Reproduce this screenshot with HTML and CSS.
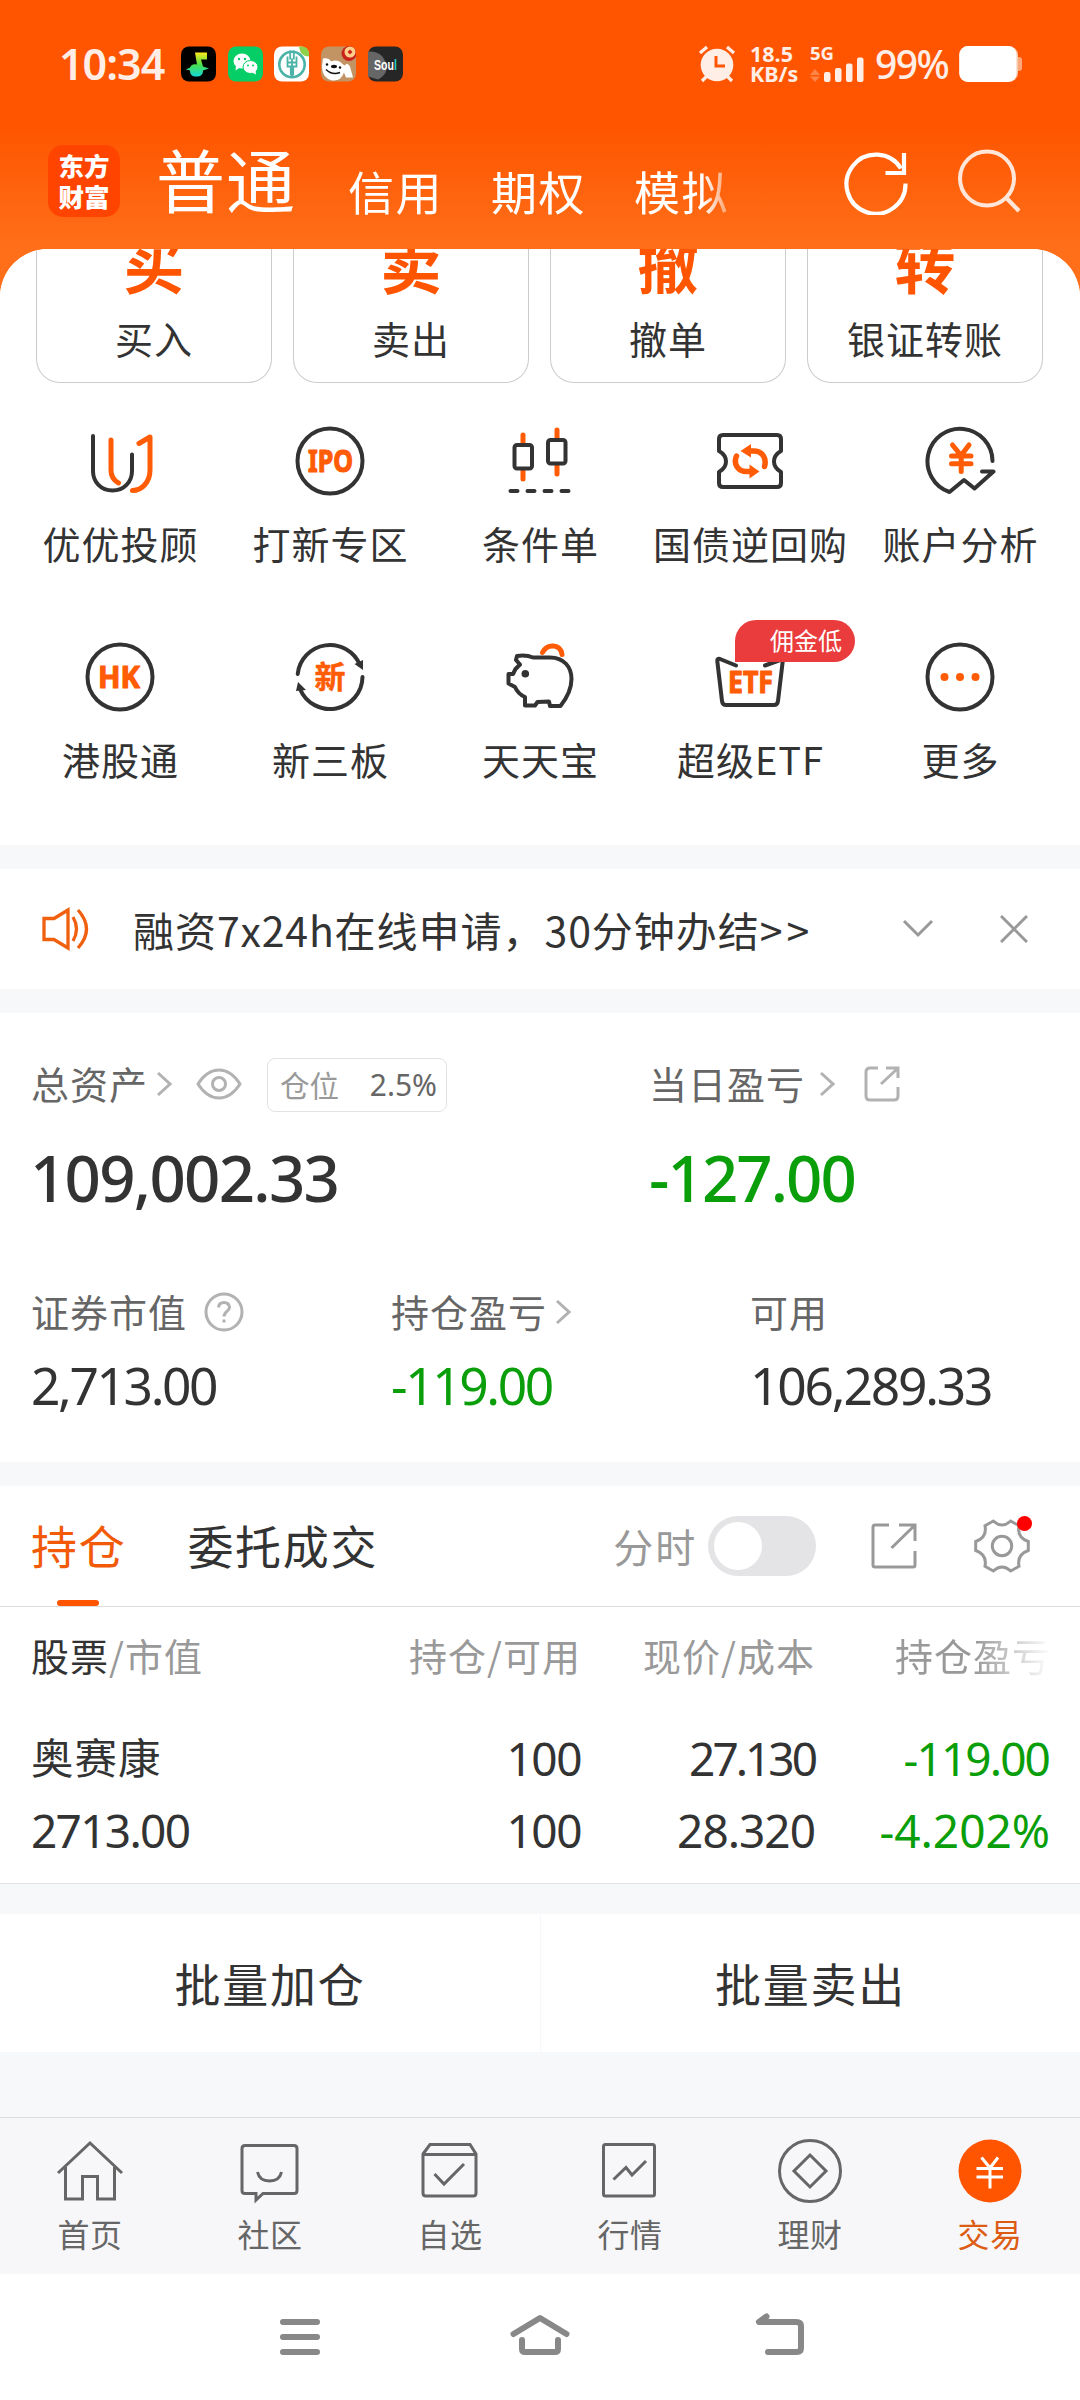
FILE: index.html
```html
<!DOCTYPE html>
<html lang="zh-CN">
<head>
<meta charset="utf-8">
<title>东方财富 - 交易</title>
<link rel="stylesheet" href="styles.css">
</head>
<body>
<div class="screen">
  <header class="top">
    <div class="status">
      <div class="clock">10:34</div>
      <div class="apps">
        <svg class="app" viewBox="0 0 35 35"><defs><linearGradient id="qm" x1="0" y1="0" x2="0" y2="1"><stop offset="0" stop-color="#ffe81c"/><stop offset=".5" stop-color="#4be04a"/><stop offset="1" stop-color="#12d8d8"/></linearGradient></defs><rect width="35" height="35" rx="8" fill="#000"/><path d="M14 6H26V13H20L22 20 28 22 22 24C22 28 20 30 15.500 30S9 28 9 24L5 23 9 21C10 18 13 17 16 18Z" fill="url(#qm)"/></svg>
        <svg class="app" viewBox="0 0 35 35"><rect width="35" height="35" rx="8" fill="#06ce66"/><ellipse cx="14" cy="14.500" rx="8.500" ry="7.500" fill="#fff"/><path d="M8 19L7.500 24 12 21Z" fill="#fff"/><circle cx="11" cy="12.500" r="1.200" fill="#06ce66"/><circle cx="17" cy="12.500" r="1.200" fill="#06ce66"/><ellipse cx="22.500" cy="20.500" rx="7.500" ry="6.500" fill="#fff" stroke="#06ce66"/><path d="M24 26L28 28 27.500 24Z" fill="#fff"/><circle cx="20" cy="19" r="1" fill="#06ce66"/><circle cx="25" cy="19" r="1" fill="#06ce66"/></svg>
        <svg class="app" viewBox="0 0 35 35"><rect width="35" height="35" rx="8" fill="#fff"/><path d="M25 0H27Q35 0 35 8V10Q26 10 25 0Z" fill="#8fd14a"/><circle cx="18" cy="18" r="12.700" fill="none" stroke="#4bb3a7" stroke-width="2.600"/><path d="M16.200 4V13M19.800 4V13M13.500 10V20H22.500V10M18 12V31M13.500 16H22.500M16.800 20V29M19.200 20V29" fill="none" stroke="#4bb3a7" stroke-width="1.800"/></svg>
        <svg class="app" viewBox="0 0 35 35"><rect width="35" height="35" rx="8" fill="#c39463"/><path d="M2 12Q8 11 10 15 17 12 22 18L24 19Q26 15 29 20L32 31 25 31 23 26Q20 35 11 34 1 31 1 20Z" fill="#fff"/><circle cx="28" cy="7" r="7.500" fill="#c9231b"/><circle cx="29" cy="5.500" r="5.500" fill="#ffd08a"/><path d="M29 3L31.500 5.500 29 8 26.500 5.500Z" fill="#c9231b"/><ellipse cx="13" cy="20" rx="3" ry="1.700" fill="#111"/><circle cx="6" cy="18" r="1.200" fill="#111"/><circle cx="19" cy="21" r="1.200" fill="#111"/><path d="M5 23Q11 29 19 26" fill="none" stroke="#111" stroke-width="1.500"/></svg>
        <svg class="app" viewBox="0 0 35 35"><rect width="35" height="35" rx="8" fill="#262626"/><path d="M0 5Q14 4 18 17 21 27 10 33L0 30Z" fill="#666"/><text x="6" y="23.500" class="soul" textLength="23" lengthAdjust="spacingAndGlyphs">Sou<tspan fill="#25d4c5">l</tspan></text></svg>
      </div>
      <div class="signals">
        <svg class="alarm" viewBox="0 0 38 38"><circle cx="19" cy="20" r="16.300" fill="#ffeee6"/><path d="M2 8L9 2M36 8L29 2M4 36L9 31M34 36L29 31" stroke="#ffeee6" stroke-width="3.200"/><path d="M18 11V21H27" fill="none" stroke="#ff5500" stroke-width="3"/></svg>
        <div class="speed"><span>18.5</span><span>KB/s</span></div>
        <svg class="bars" viewBox="0 0 56 38"><text x="0" y="15" class="g5">5G</text><path d="M5 24L10 30H0ZM5 37L0 31.500H10Z" fill="#ff8447"/><g fill="#ffeee6"><rect x="14" y="27" width="6.500" height="10" rx="2"/><rect x="25" y="23" width="6.500" height="14" rx="2"/><rect x="36" y="18.500" width="6.500" height="18.500" rx="2"/><rect x="47" y="12.500" width="6.500" height="24.500" rx="2"/></g></svg>
        <div class="percent">99%</div>
        <svg class="battery" viewBox="0 0 64 38"><rect x="56" y="12" width="7" height="14" rx="3" fill="#ffa87c"/><rect x="0" y="1" width="59" height="36" rx="9" fill="#ffc7aa"/><rect x="0.500" y="1" width="57" height="36" rx="8.500" fill="#fff"/></svg>
      </div>
    </div>
    <nav class="account-bar">
      <div class="logo"><span>东方</span><span>财富</span></div>
      <div class="accounts">
        <span class="account current">普通</span><span class="account">信用</span><span class="account">期权</span><span class="account">模拟</span>
      </div>
      <svg class="tool" viewBox="0 0 64 64"><path d="M61.500 32.500A29.500 29.500 0 1 1 57 17.500M60 2V22H41.500" fill="none" stroke="#fff" stroke-width="4.200"/></svg>
      <svg class="tool" viewBox="0 0 64 64"><circle cx="29" cy="29.500" r="27" fill="none" stroke="#ffe6d9" stroke-width="4"/><path d="M48 48.500L61 62" stroke="#ffe6d9" stroke-width="4.200"/></svg>
    </nav>
  </header>

  <main class="sheet">
    <section class="actions">
      <div class="action"><b>买</b><span>买入</span></div>
      <div class="action"><b>卖</b><span>卖出</span></div>
      <div class="action"><b>撤</b><span>撤单</span></div>
      <div class="action"><b>转</b><span>银证转账</span></div>
    </section>

    <section class="features">
      <div class="feature"><svg viewBox="0 0 72 72"><path class="dk" d="M9 11V46C9 57 17 65.500 28.500 65.500S48 57 48 46V29.500"/><path class="or" d="M27 15V45Q27 54 34.500 58M55 18.500L66 12V45C66 57 58 65.500 48.500 65.500"/></svg><span>优优投顾</span></div>
      <div class="feature"><svg viewBox="0 0 72 72"><circle class="dk" cx="36" cy="36" r="32.500"/><text class="ico" x="14" y="47" textLength="45" lengthAdjust="spacingAndGlyphs">IPO</text></svg><span>打新专区</span></div>
      <div class="feature"><svg viewBox="0 0 72 72"><path class="or" d="M19 10V19M19 46V54M53 5V14M53 41V49"/><rect class="dk" x="10.500" y="20" width="17.500" height="23.500" rx="2.500"/><rect class="dk" x="44" y="15" width="17.500" height="23.500" rx="2.500"/><path class="dk" d="M6.500 66H13.500M23.500 66H30.500M40.500 66H47.500M57.500 66H64.500"/></svg><span>条件单</span></div>
      <div class="feature"><svg viewBox="0 0 72 72"><path class="dk" d="M9 10H63Q67 10 67 14V26Q60 30 60 36.500T67 47V58Q67 62 63 62H9Q5 62 5 58V47Q12 43 12 36.500T5 26V14Q5 10 9 10Z"/><path class="or thick" d="M50.500 41.500C53 33 48 26 40 26H36M22.500 31C19 39 24 46.500 32.500 46.500H37"/><path d="M26.500 26L37 19V32.500ZM45.500 46.500L35.500 39.500V53.500Z" fill="#ff5c05"/></svg><span>国债逆回购</span></div>
      <div class="feature"><svg viewBox="0 0 72 72"><path class="dk" d="M68.500 36A32.500 32.500 0 1 0 25.500 67L40 55 50.500 63.500 69.500 46.500H58"/><path class="or" d="M28.500 20L37 30.500 45 20M27.500 31H47M27.500 38.700H47M37.200 31V46.500"/></svg><span>账户分析</span></div>
      <div class="feature"><svg viewBox="0 0 72 72"><circle class="dk" cx="36" cy="36" r="32.500"/><text class="ico" x="14" y="47" textLength="42" lengthAdjust="spacingAndGlyphs">HK</text></svg><span>港股通</span></div>
      <div class="feature"><svg viewBox="0 0 72 72"><path class="dk" d="M3.700 33A32.500 32.500 0 0 1 66 24M68.500 36A32.500 32.500 0 0 1 6 48"/><path d="M60.500 23L69 19V29ZM2 50L4 41 12 49Z" fill="#333"/><text class="ico cn" x="20.500" y="47">新</text></svg><span>新三板</span></div>
      <div class="feature"><svg viewBox="0 0 72 72"><path class="or" d="M38.500 11.500Q42 4.500 49.500 5T58 13.500"/><path class="dk" d="M13 15Q22 13.500 29 16.500H46C60 16.500 67.500 26 67.500 38 67.500 49 62 58 56.500 65H46L45 60.500 33.500 61 31 64.500H21V56Q14 53 11 46L4.500 42.500V33H9L11.500 28 16 23.500 12 19Z"/><circle cx="21.300" cy="32.700" r="3.800" fill="#333"/></svg><span>天天宝</span></div>
      <div class="feature"><em class="badge">佣金低</em><svg viewBox="0 0 72 72"><path class="dk" d="M22 24.500L6 18Q3 17 3.300 20L8 60Q8.500 64 12 64H60Q63.500 64 64 60L69 18 51 24.500"/><text class="ico" x="14" y="52" textLength="45" lengthAdjust="spacingAndGlyphs">ETF</text></svg><span>超级ETF</span></div>
      <div class="feature"><svg viewBox="0 0 72 72"><circle class="dk" cx="36" cy="36" r="32.500"/><g fill="#ff5c05"><circle cx="20.500" cy="36" r="4"/><circle cx="36" cy="36" r="4"/><circle cx="51.500" cy="36" r="4"/></g></svg><span>更多</span></div>
    </section>

    <section class="notice">
      <svg class="horn" viewBox="0 0 48 44"><path d="M2 11.500H12L26 3V41L12 32.500H2ZM31 10Q38 22 31 34M36 3Q53 22 36 41" fill="none" stroke="#f0600f" stroke-width="3.300"/></svg>
      <p>融资<i>7x24h</i>在线申请，<i>30</i>分钟办结<i>&gt;&gt;</i></p>
      <svg class="down" viewBox="0 0 32 20"><path d="M2 2L16 16 30 2" fill="none" stroke="#999" stroke-width="3"/></svg>
      <svg class="close" viewBox="0 0 28 28"><path d="M1 1L27 27M27 1L1 27" stroke="#999" stroke-width="3"/></svg>
    </section>

    <section class="assets">
      <div class="totals">
        <div class="total">
          <div class="caption">
            <span>总资产</span>
            <svg class="chev" viewBox="0 0 16 26"><path d="M2 2L14 13 2 24"/></svg>
            <svg class="eye" viewBox="0 0 46 32"><path d="M2 16Q11 2 23 2T44 16Q35 30 23 30T2 16Z"/><circle cx="23" cy="16" r="6.500"/></svg>
            <span class="position"><span>仓位</span><b>2.5%</b></span>
          </div>
          <div class="big n1">109,002.33</div>
        </div>
        <div class="total">
          <div class="caption">
            <span>当日盈亏</span>
            <svg class="chev far" viewBox="0 0 16 26"><path d="M2 2L14 13 2 24"/></svg>
            <svg class="share" viewBox="0 0 36 36"><path d="M14 2H6Q2 2 2 6V30Q2 34 6 34H30Q34 34 34 30V21M22 2H34V12M33 3L17 18"/></svg>
          </div>
          <div class="big green n2">-127.00</div>
        </div>
      </div>
      <div class="details">
        <div><div class="caption"><span>证券市值</span><svg class="help" viewBox="0 0 40 40"><circle cx="20" cy="20" r="18"/><path d="M14.500 15.500Q15 10.500 20 10.500T25.500 15.500C25.500 19 20 19.500 20 24.500M20 27.500V30.500"/></svg></div><div class="mid n3">2,713.00</div></div>
        <div><div class="caption"><span>持仓盈亏</span><svg class="chev near" viewBox="0 0 16 26"><path d="M2 2L14 13 2 24"/></svg></div><div class="mid green n4">-119.00</div></div>
        <div><div class="caption"><span>可用</span></div><div class="mid n5">106,289.33</div></div>
      </div>
    </section>

    <section class="holdings">
      <div class="tabs">
        <span class="tab on">持仓</span><span class="tab">委托成交</span>
        <span class="minute">分时</span><span class="switch"></span>
        <svg class="export" viewBox="0 0 46 46"><path d="M18 2H4Q2 2 2 4V42Q2 44 4 44H42Q44 44 44 42V28M28 2H44V18M43 3L20.500 25"/></svg>
        <span class="gear"><svg viewBox="0 0 60 60"><path d="M21.300 5Q30 13 38.700 5L47 9.700Q44.700 21.500 56.300 25.500V34.500Q44.700 38.500 47 50.300L38.700 55Q30 47 21.300 55L13 50.300Q15.300 38.500 3.700 34.500V25.500Q15.300 21.500 13 9.700Z"/><circle cx="30" cy="30" r="9.700"/></svg></span>
      </div>
      <div class="thead"><span><b>股票</b>/市值</span><span>持仓/可用</span><span>现价/成本</span><span class="fade">持仓盈亏</span></div>
      <div class="row">
        <div><span class="name">奥赛康</span><span class="n6">2713.00</span></div>
        <div><span class="n7">100</span><span class="n7">100</span></div>
        <div><span class="n8">27.130</span><span class="n9">28.320</span></div>
        <div class="green"><span class="n10">-119.00</span><span class="n11">-4.202%</span></div>
      </div>
    </section>

    <section class="batch"><button>批量加仓</button><button>批量卖出</button></section>
  </main>

  <footer class="tabbar">
    <div class="item"><svg viewBox="0 0 68 68"><path d="M2 36L34 6 66 36M9.500 30V62H26.500V39.500H41.500V62H58.500V30"/></svg><span>首页</span></div>
    <div class="item"><svg viewBox="0 0 68 68"><path d="M9 8.500H58Q61 8.500 61 11.500V53.500Q61 56.500 58 56.500H27L20 63V56.500H9Q6 56.500 6 53.500V11.500Q6 8.500 9 8.500ZM21.500 35Q23.500 44 33.500 44T45.500 35"/></svg><span>社区</span></div>
    <div class="item"><svg viewBox="0 0 68 68"><path d="M7 17L14 7.500H54L60 17V56Q60 59 57 59H10Q7 59 7 56ZM7 17.500H60M18.500 37L28 47 48 27"/></svg><span>自选</span></div>
    <div class="item"><svg viewBox="0 0 68 68"><rect x="7.500" y="7.500" width="51" height="51.500" rx="2"/><path d="M17.500 42.500L30 30.500 36 38 50 24"/></svg><span>行情</span></div>
    <div class="item"><svg viewBox="0 0 68 68"><circle cx="34" cy="34" r="30.500"/><path d="M34 18L50 34 34 50 18 34Z"/></svg><span>理财</span></div>
    <div class="item on"><svg viewBox="0 0 68 68"><circle cx="34" cy="34" r="31.500"/><path d="M25.500 20.500L34 31 42 20.500M20.500 31.500H47M20.500 40H47M34 31V51.500"/></svg><span>交易</span></div>
  </footer>

  <div class="sysnav">
    <svg viewBox="0 0 60 48"><path d="M6.500 9H40.500M6.500 24H40.500M6.500 39H40.500"/></svg>
    <svg viewBox="0 0 60 48"><path d="M3.500 21L30 5 56.500 21M12 27V36Q12 39 15 39H45Q48 39 48 36V27"/></svg>
    <svg viewBox="0 0 60 48"><path d="M16.500 3.500L9 9H46Q51 9 51 13V35Q51 39 47 39H18"/></svg>
  </div>
</div>
</body>
</html>
```
FILE: styles.css
```css
* { box-sizing: border-box; }
body { margin: 0; }
.screen {
  width: 1080px; height: 2400px; overflow: hidden;
  display: flex; flex-direction: column;
  font-family: "Noto Sans CJK SC", sans-serif;
  font-size: 38px; letter-spacing: 1px; color: #333;
  background: linear-gradient(#ff5500 0 125px, #ff6e18 245px) #ff6e18;
}
svg { display: block; flex: none; }
i, em { font-style: normal; }

.status { height: 128px; display: flex; align-items: center; padding: 0 57px 0 59px; color: #ffeee6; }
.clock { width: 122px; font: 600 43px/60px "Noto Sans"; letter-spacing: -1px; }
.apps { display: flex; gap: 11.700px; }
.app { width: 35px; height: 36px; }
.soul { font: 700 15px "Liberation Sans"; fill: #fff; letter-spacing: 0; }
.signals { display: flex; align-items: center; margin-left: auto; }
.alarm { width: 38px; height: 38px; margin-right: 14px; }
.speed { width: 60px; display: flex; flex-direction: column; font: 700 21.500px/20px "Noto Sans"; letter-spacing: 0; }
.bars { width: 56px; height: 38px; }
.g5 { font: 700 18.500px "Noto Sans"; fill: #ffeee6; letter-spacing: 0; }
.percent { width: 93px; padding-left: 9px; font: 500 39px/56px "Noto Sans"; letter-spacing: -1.500px; white-space: nowrap; }
.battery { width: 64px; height: 38px; }

.account-bar { height: 121px; display: flex; align-items: flex-start; padding: 17px 53px 0 48px; color: #fff; }
.logo { width: 72px; height: 72px; border-radius: 15px; background: #ff4400; display: flex; flex-direction: column; align-items: center; justify-content: center; padding-bottom: 3px; font-weight: 900; font-size: 25.500px; line-height: 31px; letter-spacing: 0; }
.accounts { display: flex; align-items: flex-start; width: 574px; margin: 0 112px 0 38px; white-space: nowrap; mask-image: linear-gradient(90deg, #000 545px, rgba(255,255,255,.5) 565px, rgba(255,255,255,.4) 574px); }
.account { font-size: 46px; line-height: 68px; margin: 11px 48px 0 0; letter-spacing: 1.500px; }
.account.current { font-size: 69px; line-height: 100px; margin: -17px 52px 0 -2px; letter-spacing: 1px; }
.tool { width: 64px; height: 64px; margin: 6px 0 0; }
.tool + .tool { margin: 4px 0 0 50px; }

.sheet { flex: none; background: #f7f8fa; border-radius: 48px 48px 0 0; overflow: hidden; height: 1868px; }
.actions { height: 134px; background: #fff; display: grid; grid-template-columns: repeat(4, 236px); gap: 21px; padding: 0 36px; }
.action { height: 134px; overflow: hidden; border: 1px solid #ccc; border-top: 0; border-radius: 0 0 24px 24px; display: flex; flex-direction: column; justify-content: flex-end; align-items: center; padding-bottom: 16px; }
.action b { flex: none; font-size: 61px; line-height: 64px; margin-bottom: 15px; color: #ff5500; letter-spacing: 0; font-weight: 700; }
.action span { flex: none; line-height: 56px; }

.features { height: 462px; background: #fff; display: grid; grid-template-columns: repeat(5, 210px); grid-auto-rows: 216px; padding: 42px 15px 0; }
.feature { position: relative; display: flex; flex-direction: column; align-items: center; }
.feature svg { width: 72px; height: 72px; }
.feature span { margin-top: 18px; padding-left: 1px; line-height: 56px; white-space: nowrap; }
.dk { fill: none; stroke: #333; stroke-width: 4; stroke-linecap: round; stroke-linejoin: round; }
.or { fill: none; stroke: #ff5c05; stroke-width: 5; stroke-linecap: round; stroke-linejoin: round; }
.thick { stroke-width: 5.500; }
.ico { font: 700 30.500px "Noto Sans"; fill: #ff5c05; stroke: #ff5c05; stroke-width: 1.200; stroke-linejoin: round; letter-spacing: 0; }
.ico.cn { font: 700 31px "Noto Sans CJK SC"; stroke-width: .5; }
.badge { position: absolute; z-index: 1; left: 90px; top: -21px; width: 120px; height: 42px; padding-right: 13px; border-radius: 21px 21px 21px 0; background: #ea3c3c; color: #fff; font-size: 24px; line-height: 39px; letter-spacing: 0; text-align: right; }

.notice { height: 120px; margin-top: 24px; background: #fff; display: flex; align-items: center; padding-left: 42px; }
.horn { width: 48px; height: 44px; }
.notice p { width: 722px; margin: 0 0 0 43px; font-size: 41px; line-height: 60px; white-space: nowrap; }
.notice i { letter-spacing: .800px; }
.notice i:last-child { letter-spacing: 4px; }
.down { width: 32px; height: 20px; margin-left: 47px; }
.close { width: 28px; height: 28px; margin-left: 66px; }

.assets { height: 449px; margin-top: 24px; padding: 41px 0 0 31px; background: #fff; color: #666; }
.totals { display: grid; grid-template-columns: 618px 1fr; }
.caption { height: 60px; display: flex; align-items: center; line-height: 56px; }
.caption span { padding-bottom: 2px; }
.caption svg { fill: none; stroke: #b2b2b2; stroke-width: 3; }
.chev { width: 16px; height: 26px; margin-left: 8px; }
.chev.far { margin-left: 14px; }
.chev.near { margin-left: 8px; }
.eye { width: 46px; height: 32px; margin-left: 24px; }
.caption .position { width: 180px; height: 54px; margin: 1px 0 0 25px; border: 1px solid #e2e2e2; border-radius: 8px; display: flex; align-items: center; justify-content: space-between; padding: 0 9px 0 12px; font-size: 29.500px; color: #999; letter-spacing: 0; }
.position b { font: 400 30px/50px "Noto Sans"; color: #666; letter-spacing: 0; }
.share { width: 36px; height: 36px; margin-left: 29px; }
.help { width: 40px; height: 40px; margin-left: 17px; }
.big { font: 500 63.500px/88px "Noto Sans"; margin-top: 20px; color: #333; }
.mid { font: 400 51.500px/72px "Noto Sans"; margin-top: 7px; color: #333; }
.details { display: grid; grid-template-columns: 360px 359px 1fr; margin-top: 60px; }
.assets .green, .green { color: #0a9e0a; }
.n1 { letter-spacing: -1.700px; margin-left: -1px; } .n2 { letter-spacing: -1.900px; } .n3 { letter-spacing: -2.400px; }
.n4 { letter-spacing: -2.400px; } .n5 { letter-spacing: -2.200px; } .n6 { letter-spacing: -1.700px; }
.n7 { letter-spacing: -1.500px; } .n8 { letter-spacing: -3px; } .n9 { letter-spacing: -1px; }
.n10 { letter-spacing: -1.900px; } .n11 { letter-spacing: 0; margin-right: -1px; }

.holdings { height: 398px; margin-top: 24px; background: #fff; border-bottom: 1px solid #e4e4e6; }
.tabs { height: 121px; border-bottom: 1px solid #ddd; display: flex; align-items: center; padding-left: 31px; }
.tab { position: relative; font-size: 46px; line-height: 116px; height: 120px; letter-spacing: 1.700px; margin-right: 61px; }
.tab.on { color: #f25a08; }
.tab.on::after { content: ""; position: absolute; left: 26px; bottom: 0; width: 42px; height: 6px; border-radius: 3px; background: #ff5500; }
.minute { width: 95px; margin-left: 174px; font-size: 40px; line-height: 60px; letter-spacing: 2px; color: #999; }
.switch { width: 108px; height: 60px; border-radius: 30px; background: #e4e4e6; padding: 6px; }
.switch::before { content: ""; display: block; width: 48px; height: 48px; border-radius: 50%; background: #fff; }
.export { width: 46px; height: 46px; margin-left: 55px; }
.export, .gear svg { fill: none; stroke: #999; stroke-width: 3; }
.gear { position: relative; width: 60px; height: 60px; margin-left: 55px; }
.gear::after { content: ""; position: absolute; left: 45px; top: 0; width: 15px; height: 15px; border-radius: 50%; background: #f00; }
.thead, .row { display: grid; grid-template-columns: 299px 251px 234px 1fr; padding: 0 31px; }
.thead { height: 100px; line-height: 95px; color: #999; }
.thead b { font-weight: 400; color: #333; }
.thead span:nth-child(2), .thead span:nth-child(3), .row div + div { text-align: right; }
.thead .fade { padding-left: 80px; white-space: nowrap; mask-image: linear-gradient(90deg, #000 160px, rgba(0,0,0,.1) 228px, transparent 236px); }
.row div { display: flex; flex-direction: column; font: 400 46px/72px "Noto Sans"; padding-top: 15px; }
.row .name { font: 400 42.500px/72px "Noto Sans CJK SC"; letter-spacing: 1px; margin-top: -2px; padding-bottom: 2px; }

.batch { height: 138px; margin-top: 30px; background: #fff; display: grid; grid-template-columns: 1fr 1fr; }
.batch button { font: 400 46px/136px "Noto Sans CJK SC"; letter-spacing: 1.700px; color: #333; border: 0; padding: 0 0 4px; background: none; }
.batch button + button { border-left: 1px solid #f6f7fa; }

.tabbar { flex: none; height: 157px; border-top: 1px solid #ddd; background: #f7f7fa; display: grid; grid-template-columns: repeat(6, 180px); }
.item { display: flex; flex-direction: column; align-items: center; padding-top: 19px; font-size: 32px; letter-spacing: .5px; line-height: 48px; color: #666; }
.item svg { width: 68px; height: 68px; fill: none; stroke: #666; stroke-width: 3; }
.item span { margin-top: 4px; }
.item.on { color: #dc5c14; }
.item.on circle { fill: #ff5500; stroke: none; }
.item.on path { stroke: #fff; }

.sysnav { flex: 1; background: #fff; display: flex; justify-content: center; gap: 180px; padding-top: 39px; }
.sysnav svg { width: 60px; height: 48px; fill: none; stroke: #888; stroke-width: 6; stroke-linecap: round; stroke-linejoin: round; }
.sysnav svg:first-child { padding-left: 0; overflow: visible; }
.sysnav svg:first-child path { transform: translateX(6.500px); }
```
